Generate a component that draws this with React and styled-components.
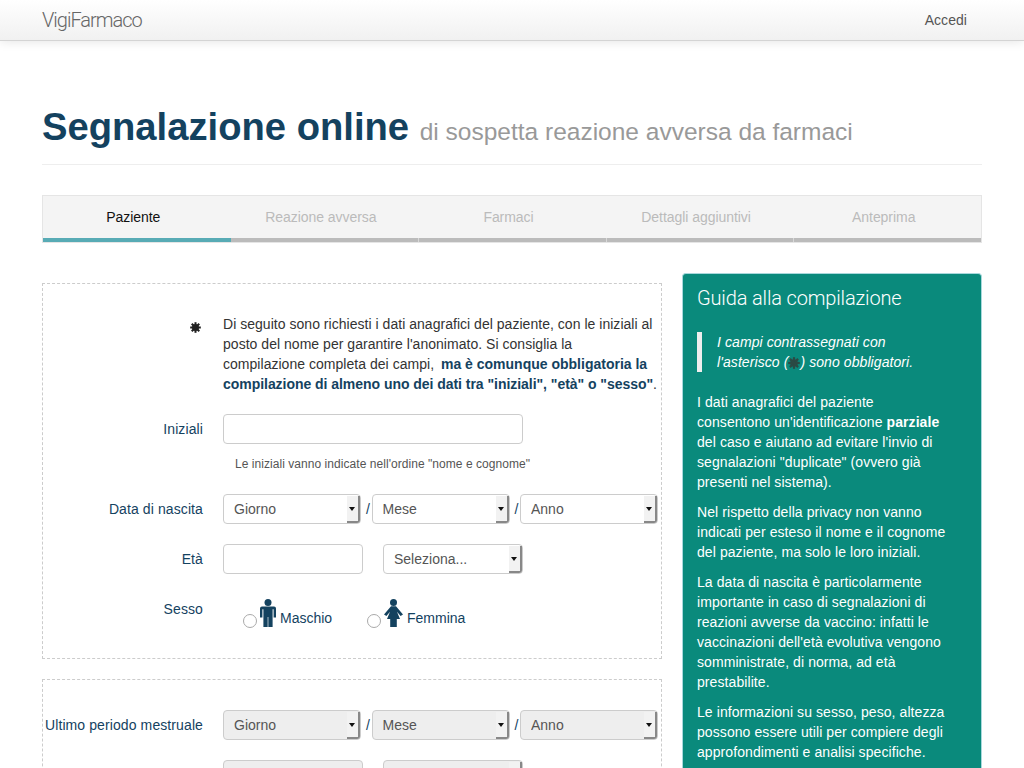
import React from 'react';
import styled, { createGlobalStyle } from 'styled-components';

const GlobalStyle = createGlobalStyle`
  html, body {
    margin: 0;
    padding: 0;
    background: #fff;
  }
  body {
    font-family: "Liberation Sans", Arial, sans-serif;
    font-size: 14px;
    line-height: 20px;
    color: #333;
  }
  * {
    box-sizing: border-box;
  }
`;

function Asterisk({ color = '#222', size = 11 }) {
  const spokes = [0, 45, 90, 135];
  return (
    <svg width={size} height={size} viewBox="0 0 12 12" aria-hidden="true">
      <circle cx="6" cy="6" r="3.8" fill={color} />
      {spokes.map((a) => (
        <rect key={a} x="4.9" y="0.2" width="2.2" height="11.6" fill={color} transform={`rotate(${a} 6 6)`} />
      ))}
    </svg>
  );
}

function MaleIcon() {
  return (
    <IconSvg width="16" height="28" viewBox="0 0 16 28" aria-hidden="true">
      <circle cx="8" cy="3.5" r="3.5" fill="#14425f" />
      <path
        d="M2 7.4h12a2 2 0 0 1 2 2v9h-2.4v-8.2h-1V28H3.4V10.2h-1v8.2H0v-9a2 2 0 0 1 2-2z"
        fill="#14425f"
      />
      <rect x="7.5" y="18" width="1" height="10" fill="#a9bcc8" />
    </IconSvg>
  );
}

function FemaleIcon() {
  return (
    <IconSvg width="19" height="28" viewBox="0 0 19 28" aria-hidden="true">
      <circle cx="9.5" cy="3.5" r="3.5" fill="#14425f" />
      <path
        d="M7 7.2h5L19 15.6l-2.4 1.5-3.6-4.4L16 20h-3.2v8H6.2v-8H3l3-7.3-3.6 4.4L0 15.6z"
        fill="#14425f"
      />
    </IconSvg>
  );
}

function Select({ label, width, disabled }) {
  return (
    <SelectBox $width={width}>
      <NativeSelect disabled={disabled} $disabled={disabled} defaultValue={label}>
        <option>{label}</option>
      </NativeSelect>
      <SelectArrow />
    </SelectBox>
  );
}

function DateSelects({ disabled }) {
  return (
    <DateRow>
      <Select label="Giorno" width={138} disabled={disabled} />
      <Slash>/</Slash>
      <Select label="Mese" width={138} disabled={disabled} />
      <Slash>/</Slash>
      <Select label="Anno" width={138} disabled={disabled} />
    </DateRow>
  );
}

const steps = ['Paziente', 'Reazione avversa', 'Farmaci', 'Dettagli aggiuntivi', 'Anteprima'];

export default function App() {
  return (
    <Page>
      <GlobalStyle />
      <NavBar>
        <Brand>VigiFarmaco</Brand>
        <NavLink href="#">Accedi</NavLink>
      </NavBar>

      <Main>
        <PageHeader>
          <Title>
            Segnalazione online <small>di sospetta reazione avversa da farmaci</small>
          </Title>
        </PageHeader>

        <Steps>
          {steps.map((s, i) => (
            <Step key={s} $active={i === 0} $divided={i > 1}>
              {s}
            </Step>
          ))}
        </Steps>

        <Columns>
          <FormColumn>
            <Fieldset>
              <Row>
                <AsteriskCell>
                  <Asterisk />
                </AsteriskCell>
                <Intro>
                  Di seguito sono richiesti i dati anagrafici del paziente, con le iniziali al
                  <br />
                  posto del nome per garantire l'anonimato. Si consiglia la
                  <br />
                  compilazione completa dei campi, <Emph $gap={3}>ma è comunque obbligatoria la</Emph>
                  <br />
                  <Emph $spacing={-0.04}>compilazione di almeno uno dei dati tra "iniziali", "età" o "sesso"</Emph>.
                </Intro>
              </Row>
              <Row>
                <Label>Iniziali</Label>
                <div>
                  <TextInput $width={300} />
                  <Hint>Le iniziali vanno indicate nell'ordine "nome e cognome"</Hint>
                </div>
              </Row>
              <Row>
                <Label>Data di nascita</Label>
                <DateSelects />
              </Row>
              <Row>
                <Label>Età</Label>
                <PairRow>
                  <TextInput $width={140} />
                  <Select label="Seleziona..." width={140} />
                </PairRow>
              </Row>
              <Row>
                <Label>Sesso</Label>
                <GenderRow>
                  <GenderOption $width={124}>
                    <Radio type="radio" name="sesso" />
                    <MaleIcon />
                    <span>Maschio</span>
                  </GenderOption>
                  <GenderOption>
                    <Radio type="radio" name="sesso" />
                    <FemaleIcon />
                    <span>Femmina</span>
                  </GenderOption>
                </GenderRow>
              </Row>
            </Fieldset>

            <Fieldset>
              <Row>
                <Label>Ultimo periodo mestruale</Label>
                <DateSelects disabled />
              </Row>
              <Row>
                <Label />
                <PairRow>
                  <TextInput $width={140} disabled />
                  <Select label="" width={140} disabled />
                </PairRow>
              </Row>
            </Fieldset>
          </FormColumn>

          <Guide>
            <GuideTitle>Guida alla compilazione</GuideTitle>
            <GuideQuote>
              I campi contrassegnati con l'asterisco{' '}
              <NoWrap>
                (<Asterisk color="#2b4a44" size={12} />)
              </NoWrap>{' '}
              sono obbligatori.
            </GuideQuote>
            <GuideText>
              I dati anagrafici del paziente consentono un'identificazione <strong>parziale</strong> del caso e aiutano
              ad evitare l'invio di segnalazioni "duplicate" (ovvero già presenti nel sistema).
            </GuideText>
            <GuideText>
              Nel rispetto della privacy non vanno indicati per esteso il nome e il cognome del paziente, ma solo le
              loro iniziali.
            </GuideText>
            <GuideText>
              La data di nascita è particolarmente importante in caso di segnalazioni di reazioni avverse da vaccino:
              infatti le vaccinazioni dell'età evolutiva vengono somministrate, di norma, ad età prestabilite.
            </GuideText>
            <GuideText>
              Le informazioni su sesso, peso, altezza possono essere utili per compiere degli approfondimenti e analisi
              specifiche.
            </GuideText>
          </Guide>
        </Columns>
      </Main>
    </Page>
  );
}

const Page = styled.div`
  height: 100vh;
  overflow: hidden;
`;

const NavBar = styled.nav`
  display: flex;
  justify-content: space-between;
  align-items: center;
  height: 41px;
  padding: 0 57px 0 42px;
  background: linear-gradient(to bottom, #ffffff, #f1f1f1);
  border-bottom: 1px solid #d4d4d4;
  box-shadow: 0 1px 10px rgba(0, 0, 0, 0.1);
`;

const Brand = styled.a`
  font-family: Roboto, "Liberation Sans", sans-serif;
  font-size: 20px;
  font-weight: 300;
  letter-spacing: -1px;
  color: #666;
`;

const NavLink = styled.a`
  font-size: 14px;
  letter-spacing: 0.05px;
  color: #555;
  text-decoration: none;
`;

const Main = styled.main`
  width: 940px;
  margin-left: 42px;
`;

const PageHeader = styled.header`
  height: 124px;
  padding-top: 61px;
  border-bottom: 1px solid #eee;
`;

const Title = styled.h1`
  margin: 0;
  font-size: 38.2px;
  line-height: 50px;
  font-weight: 700;
  color: #14425f;
  white-space: nowrap;

  small {
    font-size: 24.5px;
    font-weight: 400;
    color: #999;
  }
`;

const Steps = styled.div`
  display: grid;
  grid-template-columns: repeat(5, 1fr);
  margin-top: 30px;
  height: 48px;
  background: #f4f4f4;
  border: 1px solid #e5e5e5;
`;

const Step = styled.div`
  position: relative;
  display: flex;
  justify-content: center;
  align-items: center;
  padding-right: 7px;
  font-size: 14px;
  letter-spacing: -0.05px;
  color: ${(p) => (p.$active ? '#111' : '#bbb')};
  border-bottom: 4px solid ${(p) => (p.$active ? '#58abb5' : '#bbb')};

  &::before {
    content: ${(p) => (p.$divided ? "''" : 'none')};
    position: absolute;
    left: 0;
    bottom: -4px;
    width: 1px;
    height: 4px;
    background: #d8d8d8;
  }
`;

const Columns = styled.div`
  display: grid;
  grid-template-columns: 620px 300px;
  justify-content: space-between;
  align-items: start;
  margin-top: 30px;
`;

const FormColumn = styled.div`
  display: flex;
  flex-direction: column;
  gap: 20px;
  padding-top: 10px;
`;

const Fieldset = styled.div`
  display: flex;
  flex-direction: column;
  gap: 20px;
  padding: 30px 3px 30px 0;
  border: 1px dashed #ccc;
`;

const Row = styled.div`
  display: grid;
  grid-template-columns: 160px 1fr;
  column-gap: 20px;
`;

const Label = styled.label`
  text-align: right;
  line-height: 30px;
  letter-spacing: 0.1px;
  color: #14425f;
`;

const AsteriskCell = styled.div`
  display: flex;
  justify-content: flex-end;
  padding: 8px 2px 0 0;
`;

const Intro = styled.p`
  margin: 0;
  letter-spacing: 0.03px;
  white-space: nowrap;
  color: #333;
`;

const Emph = styled.strong`
  margin-left: ${(p) => p.$gap || 0}px;
  letter-spacing: ${(p) => p.$spacing || 0}px;
  color: #14425f;
`;

const TextInput = styled.input.attrs({ type: 'text' })`
  display: block;
  width: ${(p) => p.$width}px;
  height: 30px;
  padding: 4px 10px;
  border: 1px solid #ccc;
  border-radius: 4px;
  background: ${(p) => (p.disabled ? '#eee' : '#fff')};
  font: inherit;
`;

const Hint = styled.div`
  margin: 10px 0 0 12px;
  font-size: 12px;
  letter-spacing: 0.05px;
  color: #555;
`;

const DateRow = styled.div`
  display: flex;
  align-items: center;
`;

const Slash = styled.span`
  width: 10.5px;
  padding-left: 5px;
  white-space: nowrap;
  color: #14425f;
`;

const PairRow = styled.div`
  display: flex;
  gap: 20px;
`;

const SelectBox = styled.div`
  position: relative;
  width: ${(p) => p.$width}px;
  height: 30px;
`;

const NativeSelect = styled.select`
  appearance: none;
  display: block;
  width: 100%;
  height: 100%;
  padding: 0 20px 0 10px;
  border: 1px solid #ccc;
  border-radius: 4px;
  background: ${(p) => (p.$disabled ? '#eee' : '#fff')};
  font: inherit;
  color: #555;
  opacity: 1;
`;

const SelectArrow = styled.span`
  position: absolute;
  top: 2px;
  right: 1px;
  bottom: 1px;
  width: 13px;
  background: #f2f2f2;
  border-right: 2px solid #888;
  border-bottom: 2px solid #888;
  border-bottom-right-radius: 3px;

  &::after {
    content: '';
    position: absolute;
    top: 11px;
    left: 2px;
    border-left: 3.5px solid transparent;
    border-right: 3.5px solid transparent;
    border-top: 4px solid #111;
  }
`;

const GenderRow = styled.div`
  display: flex;
  padding-left: 20px;
  height: 34px;
`;

const GenderOption = styled.label`
  display: flex;
  align-items: flex-start;
  width: ${(p) => (p.$width ? `${p.$width}px` : 'auto')};
  color: #14425f;

  span {
    margin: 14px 0 0 4px;
  }
`;

const IconSvg = styled.svg`
  flex: none;
  margin-top: 5px;
`;

const Radio = styled.input`
  appearance: none;
  width: 14px;
  height: 14px;
  margin: 20px 3px 0 0;
  border: 1px solid #aaa;
  border-radius: 50%;
  background: #fff;
`;

const Guide = styled.aside`
  min-height: 520px;
  padding: 14px 34px 0 14px;
  background: #0a8a7c;
  border: 1px solid #a8d8dc;
  border-bottom: 0;
  border-radius: 4px 4px 0 0;
  color: #fff;
  letter-spacing: 0.08px;
`;

const GuideTitle = styled.h3`
  margin: 0 0 24px;
  font-family: Roboto, "Liberation Sans", sans-serif;
  font-size: 20px;
  line-height: 20px;
  font-weight: 300;
  letter-spacing: -0.15px;
  white-space: nowrap;
`;

const GuideQuote = styled.blockquote`
  margin: 0 0 20px;
  padding: 0 0 0 15px;
  border-left: 5px solid #eee;
  font-style: italic;

  svg {
    vertical-align: -2px;
  }
`;

const NoWrap = styled.span`
  white-space: nowrap;
`;

const GuideText = styled.p`
  margin: 0 0 10px;
`;
